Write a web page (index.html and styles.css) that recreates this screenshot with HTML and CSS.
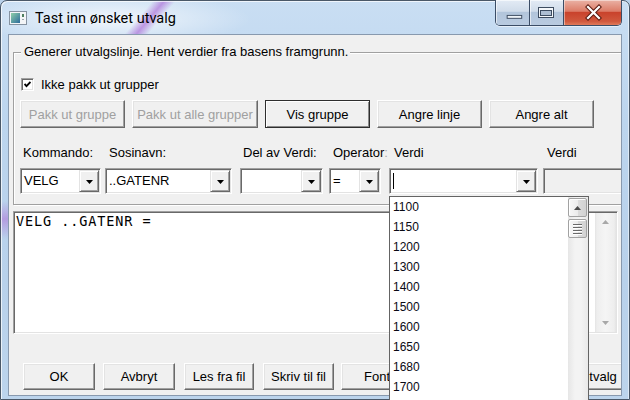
FILE: index.html
```html
<!DOCTYPE html>
<html lang="no">
<head>
<meta charset="utf-8">
<title>Tast inn ønsket utvalg</title>
<link rel="stylesheet" href="styles.css">
</head>
<body>
<div class="window">
  <div class="titlebar">
    <svg class="app-icon" width="18" height="14" viewBox="0 0 18 14">
      <defs>
        <linearGradient id="ig" x1="0" y1="0" x2="1" y2="1">
          <stop offset="0" stop-color="#8fd0a8"/>
          <stop offset="1" stop-color="#2c6b9c"/>
        </linearGradient>
      </defs>
      <rect x="0.5" y="0.5" width="17" height="13" fill="#f3f5f7" stroke="#8592a0"/>
      <rect x="2" y="2" width="9" height="10" fill="url(#ig)"/>
      <rect x="13" y="3" width="2" height="3" fill="#4f7f5f"/>
      <rect x="13" y="8" width="2" height="1" fill="#9aa5ad"/>
    </svg>
    <span class="title">Tast inn ønsket utvalg</span>
    <div class="caption">
      <div class="cap-btn cap-min">
        <svg width="34" height="25" viewBox="0 0 34 25"><rect x="11.5" y="15.5" width="15" height="3" fill="#eef3f8" stroke="#3d4c60"/></svg>
      </div>
      <div class="cap-btn cap-max">
        <svg width="33" height="25" viewBox="0 0 33 25"><rect x="8.5" y="7.5" width="15" height="10" fill="#f4f7fa" stroke="#3d4c60"/><rect x="10.5" y="10.5" width="11" height="5" fill="#aebfd3" stroke="#3d4c60"/></svg>
      </div>
      <div class="cap-btn cap-close">
        <svg width="57" height="25" viewBox="0 0 57 25"><path d="M24 7 L35 18 M35 7 L24 18" stroke="#5a1a10" stroke-width="4.2" stroke-linecap="square"/><path d="M24 7 L35 18 M35 7 L24 18" stroke="#fff" stroke-width="2.2" stroke-linecap="square"/></svg>
      </div>
    </div>
  </div>

  <div class="client">
    <fieldset class="group">
      <legend>Generer utvalgslinje. Hent verdier fra basens framgrunn.</legend>
      <label class="check-row">
        <span class="checkbox"><svg width="7" height="7" viewBox="0 0 7 7"><path d="M0.5 3 L2.5 5.2 L6.5 1" fill="none" stroke="#000" stroke-width="1.9"/></svg></span>
        Ikke pakk ut grupper
      </label>
      <div class="btn-row">
        <button class="btn w105" disabled>Pakk ut gruppe</button>
        <button class="btn w126" disabled>Pakk ut alle grupper</button>
        <button class="btn w105 default">Vis gruppe</button>
        <button class="btn w105">Angre linje</button>
        <button class="btn w105">Angre alt</button>
      </div>
      <div class="fields">
        <div class="field">
          <span class="lbl">Kommando:</span>
          <div class="combo c-kom"><span class="val">VELG</span><span class="drop"><svg width="7" height="4" viewBox="0 0 7 4"><path d="M0 0H7L3.5 4Z" fill="#000"/></svg></span></div>
        </div>
        <div class="field">
          <span class="lbl l4">Sosinavn:</span>
          <div class="combo c-sosi"><span class="val">..GATENR</span><span class="drop"><svg width="7" height="4" viewBox="0 0 7 4"><path d="M0 0H7L3.5 4Z" fill="#000"/></svg></span></div>
        </div>
        <div class="field">
          <span class="lbl">Del av Verdi:</span>
          <div class="combo c-del"><span class="val"></span><span class="drop"><svg width="7" height="4" viewBox="0 0 7 4"><path d="M0 0H7L3.5 4Z" fill="#000"/></svg></span></div>
        </div>
        <div class="field">
          <span class="lbl l4">Operator<span class="faint">:</span></span>
          <div class="combo c-op"><span class="val">=</span><span class="drop"><svg width="7" height="4" viewBox="0 0 7 4"><path d="M0 0H7L3.5 4Z" fill="#000"/></svg></span></div>
        </div>
        <div class="field">
          <span class="lbl l5">Verdi</span>
          <div class="combo c-verdi"><span class="val"><span class="caret"></span></span><span class="drop"><svg width="7" height="4" viewBox="0 0 7 4"><path d="M0 0H7L3.5 4Z" fill="#000"/></svg></span></div>
        </div>
        <div class="field">
          <span class="lbl l4">Verdi</span>
          <div class="combo c-verdi2 disabled"></div>
        </div>
      </div>
    </fieldset>

    <div class="editor">
      <div class="code">VELG ..GATENR =</div>
      <div class="vscroll">
        <svg width="7" height="4" viewBox="0 0 7 4"><path d="M0 4H7L3.5 0Z" fill="#a8a8a8"/></svg>
        <svg width="7" height="4" viewBox="0 0 7 4"><path d="M0 0H7L3.5 4Z" fill="#a8a8a8"/></svg>
      </div>
    </div>

    <div class="bottom-row">
      <button class="btn b-ok">OK</button>
      <button class="btn b-avbryt">Avbryt</button>
      <button class="btn b-les">Les fra fil</button>
      <button class="btn b-skriv">Skriv til fil</button>
      <button class="btn b-font">Font</button>
      <button class="btn b-lagre">Lagre utvalg</button>
    </div>
  </div>

  <div class="listbox">
    <ul class="items">
      <li>1100</li>
      <li>1150</li>
      <li>1200</li>
      <li>1300</li>
      <li>1400</li>
      <li>1500</li>
      <li>1600</li>
      <li>1650</li>
      <li>1680</li>
      <li>1700</li>
    </ul>
    <div class="lscroll">
      <div class="sb-btn"><svg width="7" height="4" viewBox="0 0 7 4"><path d="M0 4H7L3.5 0Z" fill="#4a4a4a"/></svg></div>
      <div class="sb-btn thumb"><span class="grip"></span><span class="grip"></span><span class="grip"></span><span class="grip"></span></div>
    </div>
  </div>
</div>
</body>
</html>
```

FILE: styles.css
```css
* { box-sizing: border-box; }
html, body { margin: 0; padding: 0; }
body {
  width: 630px;
  height: 400px;
  overflow: hidden;
  background: #b9d1ea;
  font-family: "Liberation Sans", Arial, sans-serif;
  font-size: 13px;
  color: #000;
}

/* ---------- window frame ---------- */
.window {
  position: relative;
  width: 630px;
  height: 400px;
  display: flex;
  flex-direction: column;
  padding: 0 7px 3px 7px;
  border: 1px solid #4a5868;
  border-radius: 7px 7px 0 0;
  background:
    linear-gradient(130deg, rgba(180,120,220,0) 0, rgba(180,120,220,0) 116px, rgba(170,105,215,.65) 125px, rgba(180,120,220,0) 134px) left top / 100% 34px no-repeat,
    linear-gradient(to bottom, rgba(175,120,215,0) 200px, rgba(175,120,215,.6) 218px, rgba(175,120,215,0) 238px) left top / 8px 100% no-repeat,
    radial-gradient(ellipse 140px 26px at 110px 18px, rgba(255,255,255,.75), rgba(255,255,255,0)) left top / 100% 34px no-repeat,
    linear-gradient(#c9def3, #bcd5ee 30%, #b8d1eb 70%, #bcd4ec);
  box-shadow: inset 1px 1px 0 rgba(255,255,255,.7), inset -1px 0 0 rgba(255,255,255,.5);
}

.titlebar {
  height: 33px;
  flex-shrink: 0;
  display: flex;
  align-items: center;
  padding-left: 1px;
}
.app-icon { display: block; margin-top: 1px; }
.title {
  margin: 3px 0 0 8px;
  font-family: Roboto, "Open Sans", sans-serif;
  font-size: 14.5px;
  color: #000;
  line-height: 20px;
}
.caption {
  align-self: flex-start;
  margin: -1px 0 0 auto;
  height: 26px;
  display: flex;
  border: 1px solid #3b4d66;
  border-top: none;
  border-radius: 0 0 5px 5px;
  overflow: hidden;
  box-shadow: 0 1px 0 rgba(255,255,255,.55);
}
.cap-btn { height: 100%; display: flex; }
.cap-btn svg { display: block; }
.cap-min, .cap-max {
  background: linear-gradient(#e3ebf5 0%, #d0dcea 45%, #b2c5db 50%, #b9cbe0 100%);
  border-right: 1px solid #3b4d66;
  box-shadow: inset 1px 1px 0 rgba(255,255,255,.6);
}
.cap-min { width: 34px; }
.cap-max { width: 34px; }
.cap-close {
  width: 57px;
  background: linear-gradient(#eab2a5 0%, #dc7c68 45%, #c9432c 50%, #d0583d 85%, #e07a5a 100%);
  box-shadow: inset 1px 1px 0 rgba(255,255,255,.45);
}

/* ---------- client area ---------- */
.client {
  flex: 1;
  min-height: 0;
  background: #f0f0f0;
  border: 1px solid #8899ae;
  overflow: hidden;
}

.group {
  margin: 10px -12px 0 4px;
  padding: 0 0 10px 6px;
  border: 1px solid #a0a0a0;
  box-shadow: inset 1px 1px 0 #fff, 1px 1px 0 #fff;
  min-width: 0;
}
.group legend {
  margin-left: 1px;
  padding: 0 2px 0 3px;
  line-height: 14px;
  background: #f0f0f0;
}

.check-row {
  display: flex;
  align-items: center;
  height: 13px;
  margin: 19px 0 0 1px;
}
.checkbox {
  width: 13px;
  height: 13px;
  margin-right: 7px;
  background: #fff;
  border: 1px solid;
  border-color: #a0a0a0 #fff #fff #a0a0a0;
  box-shadow: inset 1px 1px 0 #696969, inset -1px -1px 0 #e3e3e3;
  display: flex;
  align-items: center;
  justify-content: center;
}
.checkbox svg { display: block; }

.btn-row {
  display: flex;
  gap: 7px;
  margin-top: 9px;
}
.btn {
  height: 28px;
  padding: 0;
  font-family: inherit;
  font-size: 13px;
  color: #000;
  background: #f0f0f0;
  border: 1px solid;
  border-color: #fff #696969 #696969 #fff;
  box-shadow: inset -1px -1px 0 #a0a0a0, inset 1px 1px 0 #e3e3e3;
  border-radius: 0;
  white-space: nowrap;
}
.btn:disabled { color: #a0a0a0; }
.btn.default {
  border: 1px solid #2e2e2e;
  box-shadow: inset 1px 1px 0 #fff, inset -1px -1px 0 #8a8a8a;
}
.w105 { width: 105px; }
.w126 { width: 126px; }

.fields {
  display: grid;
  grid-template-columns: 85px 135px 89px 60px 154px 100px;
  margin-top: 17px;
}
.lbl {
  display: block;
  height: 15px;
  line-height: 15px;
  padding-left: 3px;
  white-space: nowrap;
  overflow: hidden;
}
.lbl.l4 { padding-left: 4px; }
.lbl.l5 { padding-left: 5px; }
.faint { color: #a9a9a9; }

.combo {
  margin-top: 8px;
  height: 26px;
  display: flex;
  padding: 1px;
  background: #fff;
  border: 1px solid;
  border-color: #a0a0a0 #fff #fff #a0a0a0;
  box-shadow: inset 1px 1px 0 #696969, inset -1px -1px 0 #e3e3e3;
}
.combo.disabled { background: #f0f0f0; }
.c-kom { width: 81px; }
.c-sosi { width: 127px; }
.c-del { width: 83px; }
.c-op { width: 52px; }
.c-verdi { width: 149px; }
.c-verdi2 { width: 100px; }
.val {
  flex: 1;
  padding-left: 2px;
  line-height: 22px;
  white-space: nowrap;
  display: flex;
  align-items: center;
}
.caret {
  display: block;
  width: 1px;
  height: 16px;
  background: #000;
}
.drop {
  width: 20px;
  height: 22px;
  flex-shrink: 0;
  background: #f0f0f0;
  border: 1px solid;
  border-color: #e3e3e3 #696969 #696969 #e3e3e3;
  box-shadow: inset 1px 1px 0 #fff, inset -1px -1px 0 #a0a0a0;
  display: flex;
  align-items: center;
  justify-content: center;
}
.drop svg { display: block; margin-top: 1px; }

/* ---------- editor ---------- */
.editor {
  display: flex;
  margin: 6px 0 0 4px;
  width: 605px;
  height: 123px;
  padding: 1px;
  background: #fff;
  border: 1px solid;
  border-color: #a0a0a0 #fff #fff #a0a0a0;
  box-shadow: inset 1px 1px 0 #696969, inset -1px -1px 0 #e3e3e3;
}
.code {
  flex: 1;
  padding: 1px 0 0 1px;
  font-family: "DejaVu Sans Mono", "Liberation Mono", monospace;
  font-size: 13.5px;
  letter-spacing: 0.9px;
  line-height: 15px;
  white-space: pre;
}
.vscroll {
  width: 21px;
  display: flex;
  flex-direction: column;
  justify-content: space-between;
  align-items: center;
  padding: 7px 0;
  background: linear-gradient(to right, #e4e4e4 0, #eeeeee 2px, #f5f5f5 50%, #eeeeee calc(100% - 2px), #e4e4e4 100%);
}
.vscroll svg { display: block; }

/* ---------- bottom buttons ---------- */
.bottom-row {
  display: flex;
  margin: 29px -2px 0 14px;
}
.bottom-row .btn { height: 27px; }
.b-ok { width: 72px; }
.b-avbryt { width: 72px; margin-left: 8px; }
.b-les { width: 70px; margin-left: 9px; }
.b-skriv { width: 71px; margin-left: 9px; }
.b-font { width: 72px; margin-left: 7px; }
.b-lagre { width: 84px; margin-left: auto; }

/* ---------- dropdown popup list ---------- */
.listbox {
  position: absolute;
  left: 388px;
  top: 195px;
  width: 200px;
  height: 215px;
  display: flex;
  background: #fff;
  border: 1px solid #646464;
}
.items {
  flex: 1;
  list-style: none;
  margin: 0;
  padding: 0;
}
.items li {
  height: 20px;
  line-height: 21px;
  padding-left: 3px;
  font-size: 12px;
  color: #0a0a14;
}
.lscroll {
  width: 20px;
  display: flex;
  flex-direction: column;
  gap: 2px;
  padding: 1px 1px 0 0;
  background: linear-gradient(to right, #e6e6e6, #f3f3f3 35%, #f3f3f3 65%, #e9e9e9);
}
.sb-btn {
  height: 19px;
  border: 1px solid #a2a2a2;
  border-radius: 2px;
  background: linear-gradient(to right, #f7f7f7, #ececec 50%, #dcdcdc 51%, #d2d2d2);
  box-shadow: inset 1px 1px 0 #fff;
  display: flex;
  flex-direction: column;
  align-items: center;
  justify-content: center;
}
.sb-btn svg { display: block; }
.thumb { gap: 2px; }
.grip {
  display: block;
  width: 9px;
  height: 1px;
  background: #6a6a6a;
  box-shadow: 0 1px 0 #fff;
}
```
